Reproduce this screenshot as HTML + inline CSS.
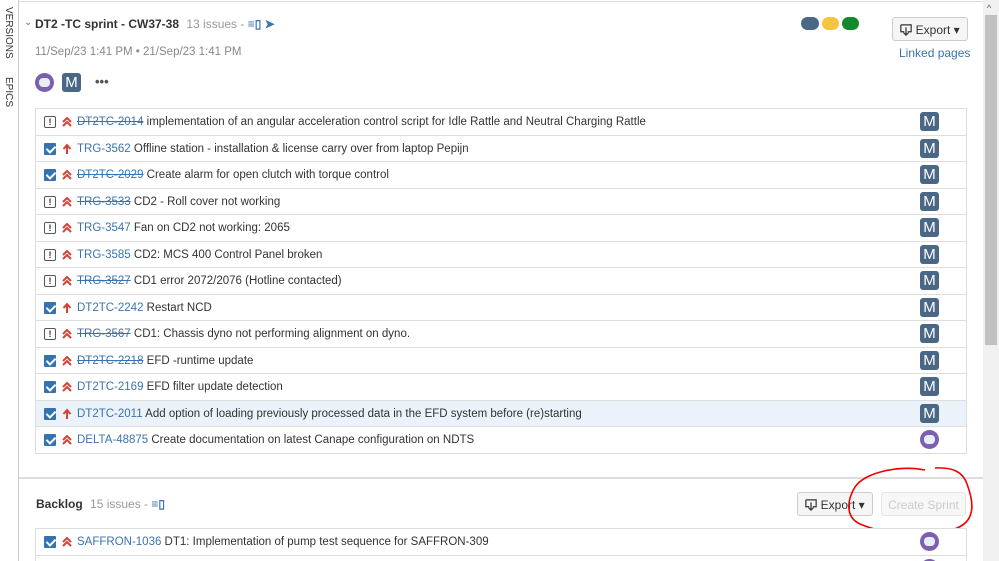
<!DOCTYPE html>
<html><head><meta charset="utf-8"><style>
*{margin:0;padding:0;box-sizing:border-box}
html,body{width:999px;height:561px;overflow:hidden}
body{background:#fff;font-family:"Liberation Sans",Arial,sans-serif;font-size:12px;color:#333;position:relative}
.abs{position:absolute}
.side{left:0;top:0;width:19px;height:561px;border-right:1px solid #ccc;background:#fff}
.vt{position:absolute;left:3px;writing-mode:vertical-rl;font-size:10px;color:#333}
.scroll{left:983px;top:0;width:16px;height:561px;background:#f0f0f0}
.thumb{left:985px;top:15px;width:12px;height:330px;background:#c1c1c1}
.tbl{position:absolute;left:35px;width:932px;border:1px solid #ddd;border-bottom:none}
.row{position:relative;width:930px;border-bottom:1px solid #ddd;background:#fff}
.row .ic{position:absolute;left:8px;top:7px;width:12px;height:12px}
.chk{background:#3572b0;border-radius:1px}
.chk:after{content:"";position:absolute;left:3.5px;top:1px;width:4px;height:7px;border:solid #fff;border-width:0 2px 2px 0;transform:rotate(45deg)}
.bang{border:1px solid #555;border-radius:2px;font-size:9px;font-weight:bold;text-align:center;line-height:10px;color:#333}
.pr{position:absolute;left:26px;top:7px}
.txt{position:absolute;left:41px;top:7px;font-size:11.5px;white-space:nowrap;color:#333}
.key{color:#3b73af}
.del{text-decoration:line-through}
.m{position:absolute;left:884px;top:3px;width:19px;height:19px;background:#4a6785;border-radius:3px;color:#fff;font-size:15px;line-height:19px;text-align:center}
.owl{position:absolute;left:884px;top:3px;width:19px;height:19px;background:#7c5fb0;border-radius:50%}
.owl:after{content:"";position:absolute;left:4px;top:5px;width:11px;height:9px;background:#e8eef7;border-radius:4px}
.btn{position:absolute;border:1px solid #ccc;border-radius:3px;background:#f5f5f5;font-size:12px;color:#333;line-height:24px;text-align:center}
</style></head><body>
<svg width="0" height="0" style="position:absolute"><defs>
<symbol id="dc" viewBox="0 0 10 12"><path d="M1 6 L5 2 L9 6 M1 10 L5 6 L9 10" fill="none" stroke="#d04437" stroke-width="2"/></symbol>
<symbol id="up" viewBox="0 0 10 12"><path d="M5 11 V3 M1.5 6 L5 2 L8.5 6" fill="none" stroke="#d04437" stroke-width="2"/></symbol>
<symbol id="ex" viewBox="0 0 14 14"><path d="M1 1 H13 V9 H9 M5 9 H1 V1" fill="none" stroke="#333" stroke-width="1.4"/><path d="M7 4 V13 M4 10 L7 13 L10 10" fill="none" stroke="#333" stroke-width="1.4"/></symbol>
</defs></svg>
<div class="abs side"><div class="vt" style="top:7px">VERSIONS</div><div class="vt" style="top:77px">EPICS</div></div>
<div class="abs" style="left:19px;top:1px;width:964px;height:1px;background:#ddd"></div>
<div class="abs scroll"></div>
<div class="abs" style="left:987px;top:3px;font-size:9px;color:#555">^</div>
<div class="abs thumb"></div>

<div class="abs" style="left:24px;top:17px;font-size:10px;color:#777">⌄</div>
<div class="abs" style="left:35px;top:17px;font-size:12px;font-weight:bold;color:#333">DT2 -TC sprint - CW37-38 <span style="font-weight:normal;color:#999;margin-left:4px">13 issues - </span><span style="color:#3b73af;font-weight:bold">≡▯</span> <span style="color:#3b73af">➤</span></div>
<div class="abs" style="left:35px;top:46px;font-size:11.5px;color:#888">11/Sep/23 1:41 PM • 21/Sep/23 1:41 PM</div>
<div class="abs" style="left:35px;top:73px;width:19px;height:19px;border-radius:50%;background:#7c5fb0"><div style="position:absolute;left:4px;top:5px;width:11px;height:9px;background:#e8eef7;border-radius:4px"></div></div>
<div class="abs" style="left:62px;top:73px;width:19px;height:19px;background:#4a6785;border-radius:3px;color:#fff;font-size:15px;line-height:19px;text-align:center">M</div>
<div class="abs" style="left:95px;top:74px;font-size:13px;font-weight:bold;color:#555">•••</div>

<div class="abs" style="left:801px;top:17px;width:18px;height:13px;border-radius:7px;background:#4a6785"></div>
<div class="abs" style="left:822px;top:17px;width:17px;height:13px;border-radius:7px;background:#f6c342"></div>
<div class="abs" style="left:842px;top:17px;width:17px;height:13px;border-radius:7px;background:#14892c"></div>
<div class="btn" style="left:892px;top:17px;width:76px;height:24px"><svg width="12" height="12" style="vertical-align:-2px"><use href="#ex"/></svg> Export ▾</div>
<div class="abs" style="left:899px;top:46px;color:#3b73af;font-size:12px">Linked pages</div>

<div class="tbl" style="top:108px">
<div class="row" style="height:27px"><div class="ic bang">!</div><svg class="pr" width="10" height="12"><use href="#dc"/></svg><div class="txt"><span class="key del">DT2TC-2014</span> implementation of an angular acceleration control script for Idle Rattle and Neutral Charging Rattle</div><div class="m">M</div></div>
<div class="row" style="height:26px"><div class="ic chk"></div><svg class="pr" width="10" height="12"><use href="#up"/></svg><div class="txt"><span class="key">TRG-3562</span> Offline station - installation &amp; license carry over from laptop Pepijn</div><div class="m">M</div></div>
<div class="row" style="height:27px"><div class="ic chk"></div><svg class="pr" width="10" height="12"><use href="#dc"/></svg><div class="txt"><span class="key del">DT2TC-2029</span> Create alarm for open clutch with torque control</div><div class="m">M</div></div>
<div class="row" style="height:26px"><div class="ic bang">!</div><svg class="pr" width="10" height="12"><use href="#dc"/></svg><div class="txt"><span class="key del">TRG-3533</span> CD2 - Roll cover not working</div><div class="m">M</div></div>
<div class="row" style="height:27px"><div class="ic bang">!</div><svg class="pr" width="10" height="12"><use href="#dc"/></svg><div class="txt"><span class="key">TRG-3547</span> Fan on CD2 not working: 2065</div><div class="m">M</div></div>
<div class="row" style="height:26px"><div class="ic bang">!</div><svg class="pr" width="10" height="12"><use href="#dc"/></svg><div class="txt"><span class="key">TRG-3585</span> CD2: MCS 400 Control Panel broken</div><div class="m">M</div></div>
<div class="row" style="height:27px"><div class="ic bang">!</div><svg class="pr" width="10" height="12"><use href="#dc"/></svg><div class="txt"><span class="key del">TRG-3527</span> CD1 error 2072/2076 (Hotline contacted)</div><div class="m">M</div></div>
<div class="row" style="height:26px"><div class="ic chk"></div><svg class="pr" width="10" height="12"><use href="#up"/></svg><div class="txt"><span class="key">DT2TC-2242</span> Restart NCD</div><div class="m">M</div></div>
<div class="row" style="height:27px"><div class="ic bang">!</div><svg class="pr" width="10" height="12"><use href="#dc"/></svg><div class="txt"><span class="key del">TRG-3567</span> CD1: Chassis dyno not performing alignment on dyno.</div><div class="m">M</div></div>
<div class="row" style="height:26px"><div class="ic chk"></div><svg class="pr" width="10" height="12"><use href="#dc"/></svg><div class="txt"><span class="key del">DT2TC-2218</span> EFD -runtime update</div><div class="m">M</div></div>
<div class="row" style="height:27px"><div class="ic chk"></div><svg class="pr" width="10" height="12"><use href="#dc"/></svg><div class="txt"><span class="key">DT2TC-2169</span> EFD filter update detection</div><div class="m">M</div></div>
<div class="row" style="height:26px;background:#ebf2f9"><div class="ic chk"></div><svg class="pr" width="10" height="12"><use href="#up"/></svg><div class="txt"><span class="key">DT2TC-2011</span> Add option of loading previously processed data in the EFD system before (re)starting</div><div class="m">M</div></div>
<div class="row" style="height:27px"><div class="ic chk"></div><svg class="pr" width="10" height="12"><use href="#dc"/></svg><div class="txt"><span class="key">DELTA-48875</span> Create documentation on latest Canape configuration on NDTS</div><div class="owl"></div></div>
</div>

<div class="abs" style="left:19px;top:477px;width:964px;height:2px;background:#ddd"></div>
<div class="abs" style="left:36px;top:497px;font-weight:bold;color:#333">Backlog <span style="font-weight:normal;color:#999;margin-left:4px">15 issues - </span><span style="color:#3b73af;font-weight:bold">≡▯</span></div>
<div class="btn" style="left:797px;top:492px;width:76px;height:24px"><svg width="12" height="12" style="vertical-align:-2px"><use href="#ex"/></svg> Export ▾</div>
<div class="btn" style="left:881px;top:492px;width:85px;height:24px;background:#f7f7f7;color:#ccc;border-color:#e5e5e5">Create Sprint</div>
<svg class="abs" style="left:845px;top:462px" width="140" height="80"><path d="M80 8 C55 3,20 10,10 25 C2 38,0 55,15 62 C45 75,95 75,112 66 C132 58,128 38,122 22 C118 10,108 5,90 6" fill="none" stroke="#e00" stroke-width="1.6"/></svg>

<div class="tbl" style="top:528px">
<div class="row" style="height:27px"><div class="ic chk"></div><svg class="pr" width="10" height="12"><use href="#dc"/></svg><div class="txt"><span class="key">SAFFRON-1036</span> DT1: Implementation of pump test sequence for SAFFRON-309</div><div class="owl"></div></div>
<div class="row" style="height:27px"><div class="owl"></div></div>
</div>
</body></html>
